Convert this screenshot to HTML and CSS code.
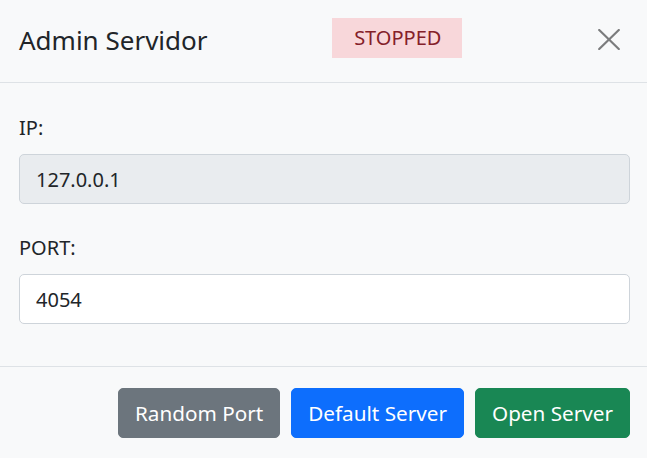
FILE: index.html
```html
<!DOCTYPE html>
<html lang="es">
<head>
<meta charset="utf-8">
<title>Admin Servidor</title>
<link rel="stylesheet" href="styles.css">
</head>
<body>
<div class="modal">
  <div class="modal-header">
    <h5 class="modal-title">Admin Servidor</h5>
    <div class="status">STOPPED</div>
    <button class="btn-close" type="button" aria-label="Close">
      <svg width="22" height="21" viewBox="0 0 22 21" aria-hidden="true">
        <path d="M1.2 1 L20.8 20 M20.8 1 L1.2 20" stroke="#7b7c7d" stroke-width="2.2" stroke-linecap="round" fill="none"/>
      </svg>
    </button>
  </div>
  <div class="modal-body">
    <div class="field">
      <label class="form-label">IP:</label>
      <input class="form-control disabled" type="text" value="127.0.0.1" disabled>
    </div>
    <div class="field">
      <label class="form-label">PORT:</label>
      <input class="form-control" type="text" value="4054">
    </div>
  </div>
  <div class="modal-footer">
    <button class="btn btn-secondary" type="button">Random Port</button>
    <button class="btn btn-primary" type="button">Default Server</button>
    <button class="btn btn-success" type="button">Open Server</button>
  </div>
</div>
</body>
</html>
```

FILE: styles.css
```css
* {
  box-sizing: border-box;
}

html, body {
  margin: 0;
  padding: 0;
  background: #f8f9fa;
}

body {
  font-family: "Noto Sans", "Open Sans", sans-serif;
  color: #212529;
  width: 647px;
  height: 458px;
  overflow: hidden;
}

.modal {
  background: #f8f9fa;
}

.modal-header {
  display: flex;
  justify-content: space-between;
  align-items: center;
  height: 83px;
  padding: 18px 17px 24px 19px;
  border-bottom: 1px solid #dee2e6;
}

.modal-title {
  margin: 4px 0 0 0;
  font-size: 26px;
  font-weight: 400;
  line-height: 36px;
  color: #212529;
}

.status {
  height: 40px;
  padding: 0 21px 0 22px;
  background: #f8d7da;
  color: #842029;
  font-size: 20px;
  line-height: 40px;
  margin-left: -2px;
}

.btn-close {
  width: 41px;
  height: 40px;
  padding: 0;
  border: 0;
  background: transparent;
  display: flex;
  align-items: center;
  justify-content: center;
  margin-top: 2px;
}

.modal-body {
  padding: 30px 17px 13px 19px;
}

.field {
  margin-bottom: 29px;
}

.form-label {
  display: block;
  font-size: 20px;
  line-height: 30px;
  margin-bottom: 11px;
}

.form-control {
  display: block;
  width: 100%;
  height: 50px;
  padding: 0 16px;
  font-family: "Noto Sans", "Open Sans", sans-serif;
  font-size: 20px;
  color: #212529;
  background: #ffffff;
  border: 1px solid #ced4da;
  border-radius: 5px;
  outline: none;
}

.form-control.disabled {
  background: #e9ecef;
  opacity: 1;
  -webkit-text-fill-color: #212529;
}

.modal-footer {
  display: flex;
  justify-content: flex-end;
  gap: 11px;
  padding: 21px 17px 20px 19px;
  border-top: 1px solid #dee2e6;
}

.btn {
  height: 50px;
  padding: 0 16px;
  font-family: "Noto Sans", "Open Sans", sans-serif;
  font-size: 20.7px;
  line-height: 48px;
  color: #ffffff;
  border: 1px solid transparent;
  border-radius: 5px;
}

.btn-secondary {
  background: #6c757d;
  border-color: #6c757d;
}

.btn-primary {
  background: #0d6efd;
  border-color: #0d6efd;
}

.btn-success {
  background: #198754;
  border-color: #198754;
}
```
